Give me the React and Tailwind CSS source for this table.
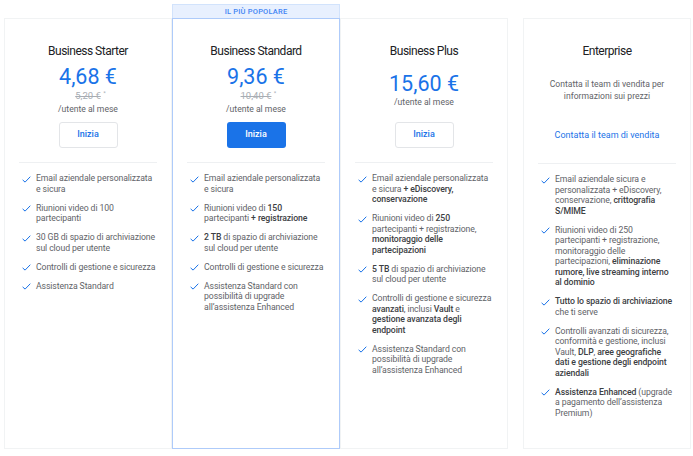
import React from 'react';

// each feature is a list of lines, each line a list of [text, bold] segments
const plans = [
  {
    name: 'Business Starter',
    price: '4,68 €',
    old: '5,20 €',
    features: [
      [[['Email aziendale personalizzata']], [['e sicura']]],
      [[['Riunioni video di 100']], [['partecipanti']]],
      [[['30 GB di spazio di archiviazione']], [['sul cloud per utente']]],
      [[['Controlli di gestione e sicurezza']]],
      [[['Assistenza Standard']]],
    ],
  },
  {
    name: 'Business Standard',
    price: '9,36 €',
    old: '10,40 €',
    popular: true,
    features: [
      [[['Email aziendale personalizzata']], [['e sicura']]],
      [[['Riunioni video di '], ['150', 1]], [['partecipanti '], ['+ registrazione', 1]]],
      [[['2 TB', 1], [' di spazio di archiviazione']], [['sul cloud per utente']]],
      [[['Controlli di gestione e sicurezza']]],
      [[['Assistenza Standard con']], [['possibilità di upgrade']], [['all’assistenza Enhanced']]],
    ],
  },
  {
    name: 'Business Plus',
    price: '15,60 €',
    features: [
      [[['Email aziendale personalizzata']], [['e sicura '], ['+ eDiscovery,', 1]], [['conservazione', 1]]],
      [[['Riunioni video di '], ['250', 1]], [['partecipanti + registrazione,']], [['monitoraggio delle', 1]], [['partecipazioni', 1]]],
      [[['5 TB', 1], [' di spazio di archiviazione']], [['sul cloud per utente']]],
      [[['Controlli di gestione e sicurezza']], [['avanzati', 1], [', inclusi '], ['Vault', 1], [' e']], [['gestione avanzata degli', 1]], [['endpoint', 1]]],
      [[['Assistenza Standard con']], [['possibilità di upgrade']], [['all’assistenza Enhanced']]],
    ],
  },
];

const enterpriseFeatures = [
  [[['Email aziendale sicura e']], [['personalizzata + eDiscovery,']], [['conservazione, '], ['crittografia', 1]], [['S/MIME', 1]]],
  [[['Riunioni video di 250']], [['partecipanti + registrazione,']], [['monitoraggio delle']], [['partecipazioni, '], ['eliminazione', 1]], [['rumore, live streaming interno', 1]], [['al dominio', 1]]],
  [[['Tutto lo spazio di archiviazione', 1]], [['che ti serve']]],
  [[['Controlli avanzati di sicurezza,']], [['conformità e gestione, inclusi']], [['Vault, '], ['DLP', 1], [', '], ['aree geografiche', 1]], [['dati e gestione degli endpoint', 1]], [['aziendali', 1]]],
  [[['Assistenza Enhanced', 1], [' (upgrade']], [['a pagamento dell’assistenza']], [['Premium)']]],
];

function Check() {
  return (
    <svg width="9" height="7" viewBox="0 0 9 7" className="shrink-0 mt-[2.5px]">
      <path d="M0.6 3.9 L3.1 6.1 L8.3 0.7" fill="none" stroke="#1a73e8" strokeWidth="1" />
    </svg>
  );
}

function Features({ items }) {
  return (
    <ul className="flex flex-col gap-[8.5px] pt-[10px] pl-[3px]">
      {items.map((lines, i) => (
        <li key={i} className="flex gap-[5px] text-[8.7px] leading-[10.5px] tracking-[-0.1px] text-[#5f6368]">
          <Check />
          <div className="flex flex-col whitespace-nowrap">
            {lines.map((segs, k) => (
              <div key={k}>
                {segs.map(([t, b], j) =>
                  b ? <span key={j} className="font-medium text-[#3c4043]">{t}</span> : <span key={j}>{t}</span>
                )}
              </div>
            ))}
          </div>
        </li>
      ))}
    </ul>
  );
}

function Card({ plan, className }) {
  return (
    <div className={`w-[168px] h-[431px] bg-white px-[14px] pt-[24px] flex flex-col ${className}`}>
      <div className="text-center text-[12px] leading-[16px] tracking-[-0.5px] text-[#202124]">{plan.name}</div>
      <div className="mt-[1px] h-[58px] flex flex-col items-center justify-center">
        <div className="text-[21.5px] leading-[26px] text-[#1a73e8]">{plan.price}</div>
        {plan.old && (
          <div className="mt-[1px] text-[9.5px] leading-[10px] text-[#a8adb3] relative">
            <span className="line-through">{plan.old}</span>
            <span className="absolute -right-[5px] -top-[3px] text-[6px]">*</span>
          </div>
        )}
        <div className={`${plan.old ? 'mt-[3px]' : ''} text-[8.6px] leading-[10px] text-[#5f6368]`}>/utente al mese</div>
      </div>
      <div className="mt-[4px] flex justify-center">
        {plan.popular ? (
          <button className="w-[59px] h-[26px] rounded-[3px] bg-[#1a73e8] text-white text-[9px] font-medium">Inizia</button>
        ) : (
          <button className="w-[59px] h-[26px] rounded-[3px] border border-[#e3e5e8] bg-white text-[#1a73e8] text-[9px] font-medium">Inizia</button>
        )}
      </div>
      <div className="mt-[14px] h-px bg-[#eef0f2]" />
      <Features items={plan.features} />
    </div>
  );
}

export default function App() {
  return (
    <div className="w-[693px] h-[456px] bg-white pl-[4px] pt-[4px] flex gap-[15px] font-['Roboto',sans-serif]">
      <div className="flex">
        <Card plan={plans[0]} className="mt-[14px] border border-[#f1f3f4]" />
        <div className="flex flex-col">
          <div className="h-[14px] w-[168px] bg-[#e8f0fe] border border-b-0 border-[#d2e3fc] flex items-center justify-center text-[7.5px] font-medium tracking-[0.2px] text-[#4285f4]">
            IL PIÙ POPOLARE
          </div>
          <Card plan={plans[1]} className="border border-[#aecbfa]" />
        </div>
        <Card plan={plans[2]} className="mt-[14px] border border-[#f1f3f4]" />
      </div>
      <div className="mt-[14px] w-[168px] h-[431px] border border-[#f1f3f4] px-[14px] pt-[24px] flex flex-col">
        <div className="text-center text-[12px] leading-[16px] tracking-[-0.5px] text-[#202124]">Enterprise</div>
        <div className="mt-[2px] h-[58px] flex flex-col items-center justify-center text-center text-[8.6px] leading-[12px] text-[#5f6368]">
          <div>Contatta il team di vendita per</div>
          <div>informazioni sui prezzi</div>
        </div>
        <div className="mt-[4px] h-[26px] flex items-center justify-center text-[9px] text-[#1a73e8]">
          Contatta il team di vendita
        </div>
        <div className="mt-[14px] h-px bg-[#eef0f2]" />
        <Features items={enterpriseFeatures} />
      </div>
    </div>
  );
}
